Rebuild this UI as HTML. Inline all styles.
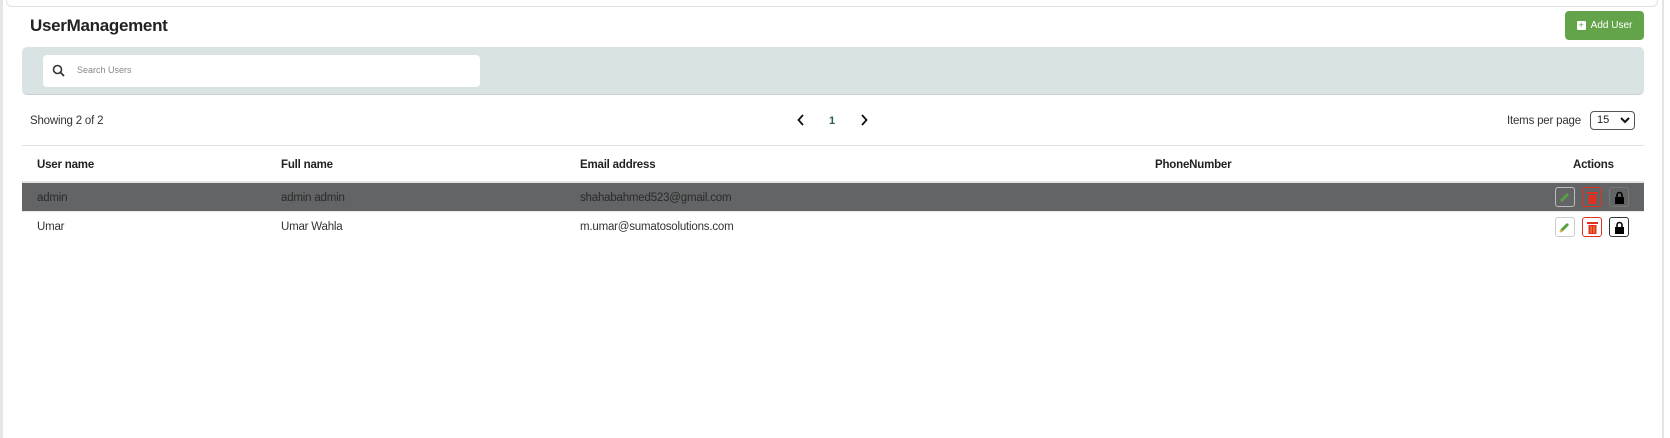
<!DOCTYPE html>
<html><head><style>
*{box-sizing:border-box;margin:0;padding:0}
body{width:1670px;height:438px;background:#fff;font-family:"Liberation Sans",sans-serif;position:relative;overflow:hidden;color:#222}
.abs{position:absolute}
.t{font-size:11.5px;white-space:nowrap;letter-spacing:-0.2px}
.b{font-weight:bold}
.ic{position:absolute;width:20px;height:20px;border-radius:3px;display:flex;align-items:center;justify-content:center}
</style></head><body>
<div class="abs" style="left:0;top:0;width:3px;height:438px;background:#e6e6e6"></div>
<div class="abs" style="left:6px;top:-10px;width:1652px;height:17px;border:1px solid #e2e2e2;border-radius:6px"></div>
<div class="abs" style="left:1662px;top:0;width:2px;height:438px;background:#e4e4e4"></div>
<div class="abs b" style="left:30px;top:16px;font-size:17px;letter-spacing:-0.3px;color:#222">UserManagement</div>
<div class="abs" style="left:1565px;top:11px;width:79px;height:29px;background:#63a44b;border-radius:4px;color:#fff;font-size:10px;display:flex;align-items:center;justify-content:center;gap:5px"><span style="display:inline-block;width:9px;height:9px;background:#fff;border-radius:1px;color:#63a44b;font-size:9px;line-height:9px;text-align:center">+</span>Add User</div>
<div class="abs" style="left:22px;top:47px;width:1622px;height:48px;background:#dae3e3;border-radius:5px;border-bottom:1px solid #c8d0d0"></div>
<div class="abs" style="left:43px;top:55px;width:437px;height:32px;background:#fff;border-radius:4px"></div>
<svg class="abs" style="left:52px;top:64px" width="13" height="13" viewBox="0 0 13 13"><circle cx="5.5" cy="5.5" r="4" fill="none" stroke="#333" stroke-width="1.6"/><line x1="8.5" y1="8.5" x2="12" y2="12" stroke="#333" stroke-width="1.8"/></svg>
<div class="abs" style="left:77px;top:65px;font-size:9px;color:#888">Search Users</div>
<div class="abs t" style="left:30px;top:115px;color:#333">Showing 2 of 2</div>
<svg class="abs" style="left:797px;top:114px" width="8" height="12"><path d="M6 1 1.5 6 6 11" fill="none" stroke="#111" stroke-width="1.8"/></svg>
<div class="abs b" style="left:829px;top:115px;font-size:11px;color:#2a5a5a">1</div>
<svg class="abs" style="left:860px;top:114px" width="8" height="12"><path d="M2 1 6.5 6 2 11" fill="none" stroke="#111" stroke-width="1.8"/></svg>
<div class="abs t" style="left:1507px;top:115px;color:#333">Items per page</div>
<div class="abs" style="left:1590px;top:111px;width:45px;height:19px;border:1px solid #555;border-radius:4px;font-size:11px;padding:2px 0 0 6px">15</div>
<svg class="abs" style="left:1620px;top:117px" width="10" height="7"><path d="M1 1 5 5 9 1" fill="none" stroke="#111" stroke-width="2"/></svg>
<div class="abs" style="left:22px;top:145px;width:1622px;height:1px;background:#e0e0e6"></div>
<div class="abs t b" style="left:37px;top:159px">User name</div>
<div class="abs t b" style="left:281px;top:159px">Full name</div>
<div class="abs t b" style="left:580px;top:159px">Email address</div>
<div class="abs t b" style="left:1155px;top:159px">PhoneNumber</div>
<div class="abs t b" style="left:1573px;top:159px">Actions</div>
<div class="abs" style="left:22px;top:181px;width:1622px;height:2px;background:#e4e4e4"></div>
<div class="abs" style="left:22px;top:183px;width:1622px;height:28px;background:#636466"></div>
<div class="abs t" style="left:37px;top:192px;color:#2a2a2a">admin</div>
<div class="abs t" style="left:281px;top:192px;color:#2a2a2a">admin admin</div>
<div class="abs t" style="left:580px;top:192px;color:#2a2a2a">shahabahmed523@gmail.com</div>
<div class="abs" style="left:22px;top:211px;width:1622px;height:1px;background:#e8e8e8"></div>
<div class="abs t" style="left:37px;top:221px;color:#333">Umar</div>
<div class="abs t" style="left:281px;top:221px;color:#333">Umar Wahla</div>
<div class="abs t" style="left:580px;top:221px;color:#333">m.umar@sumatosolutions.com</div>
<div class="ic" style="left:1555px;top:187px;border:1px solid #bbb"><svg width="12" height="12"><path d="M2 10 9 3" stroke="#5aa040" stroke-width="3"/></svg></div>
<div class="ic" style="left:1582px;top:187px;border:1px solid #e03020"><svg width="11" height="13"><rect x="0" y="1" width="11" height="2" fill="#e03020"/><rect x="1.5" y="4" width="8" height="9" fill="#e03020"/></svg></div>
<div class="ic" style="left:1609px;top:187px;border:1px solid #777"><svg width="11" height="13"><path d="M3 6V4a2.5 2.5 0 0 1 5 0v2" fill="none" stroke="#000" stroke-width="1.6"/><rect x="1" y="6" width="9" height="7" fill="#000"/></svg></div>
<div class="ic" style="left:1555px;top:217px;border:1px solid #ccc"><svg width="12" height="12"><path d="M2 10 9 3" stroke="#5aa040" stroke-width="3"/><path d="M1 11 3 9" stroke="#e8b040" stroke-width="2"/></svg></div>
<div class="ic" style="left:1582px;top:217px;border:1px solid #e03020"><svg width="11" height="13"><rect x="0" y="1" width="11" height="2" fill="#e03020"/><rect x="1.5" y="4" width="8" height="9" fill="#e03020"/><rect x="3.5" y="5" width="1" height="7" fill="#f0a040"/><rect x="6.5" y="5" width="1" height="7" fill="#f0a040"/></svg></div>
<div class="ic" style="left:1609px;top:217px;border:1px solid #333"><svg width="11" height="13"><path d="M3 6V4a2.5 2.5 0 0 1 5 0v2" fill="none" stroke="#000" stroke-width="1.6"/><rect x="1" y="6" width="9" height="7" fill="#000"/></svg></div>
</body></html>
